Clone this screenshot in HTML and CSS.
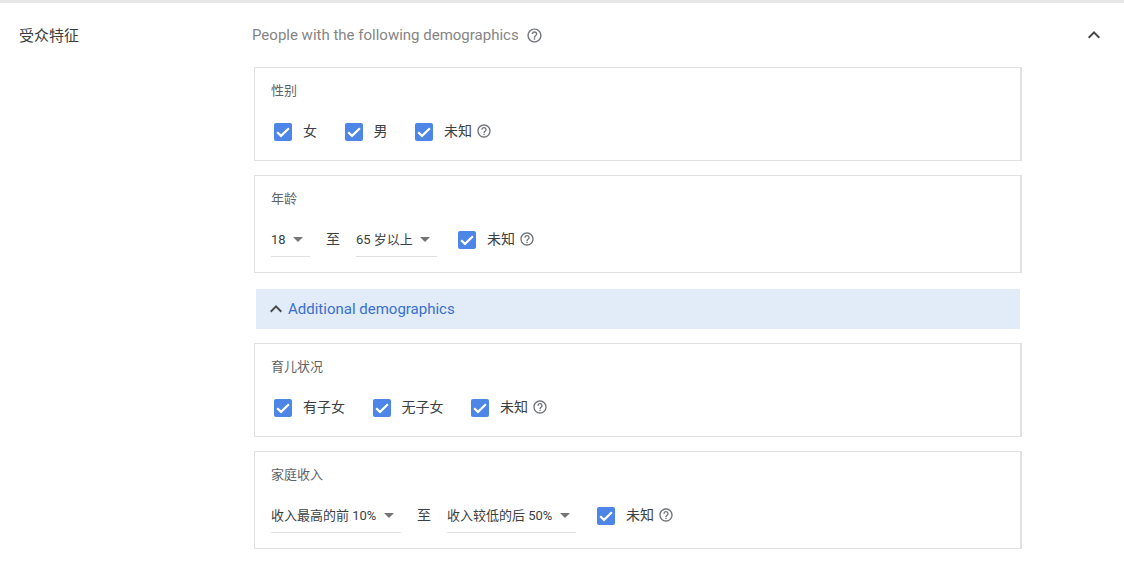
FILE: index.html
```html
<!DOCTYPE html>
<html lang="zh-CN">
<head>
<meta charset="utf-8">
<title>受众特征</title>
<link rel="stylesheet" href="styles.css">
</head>
<body>
<svg class="defs" width="0" height="0" aria-hidden="true">
  <symbol id="help" viewBox="0 0 24 24"><path d="M11 18h2v-2h-2v2zm1-16C6.48 2 2 6.48 2 12s4.48 10 10 10 10-4.48 10-10S17.52 2 12 2zm0 18c-4.41 0-8-3.59-8-8s3.59-8 8-8 8 3.59 8 8-3.59 8-8 8zm0-14c-2.21 0-4 1.79-4 4h2c0-1.1.9-2 2-2s2 .9 2 2c0 2-3 1.75-3 5h2c0-2.25 3-2.5 3-5 0-2.21-1.79-4-4-4z"/></symbol>
  <symbol id="box" viewBox="0 0 18 18"><rect width="18" height="18" rx="2" fill="#4d86e6"/><path d="M3.2 9.2l3.8 3.7L14.9 5.2" fill="none" stroke="#fff" stroke-width="2.2"/></symbol>
  <symbol id="up" viewBox="0 0 24 24"><path d="M7.41 15.41 12 10.83l4.59 4.58L18 14l-6-6-6 6z"/></symbol>
</svg>
<main class="section">
  <h2 class="section-label">受众特征</h2>
  <div class="section-body">
    <div class="intro">
      <span class="intro-text">People with the following demographics</span>
      <svg class="help help-intro"><use href="#help"/></svg>
    </div>

    <section class="card">
      <h3 class="card-title">性别</h3>
      <div class="controls checks">
        <label class="check"><svg class="box"><use href="#box"/></svg><span class="check-text">女</span></label>
        <label class="check"><svg class="box"><use href="#box"/></svg><span class="check-text">男</span></label>
        <label class="check"><svg class="box"><use href="#box"/></svg><span class="check-text">未知</span><svg class="help"><use href="#help"/></svg></label>
      </div>
    </section>

    <section class="card card-range">
      <h3 class="card-title">年龄</h3>
      <div class="controls">
        <div class="select select-18"><span>18</span><i class="caret"></i></div>
        <span class="to">至</span>
        <div class="select select-65"><span>65 岁以上</span><i class="caret"></i></div>
        <label class="check check-after"><svg class="box"><use href="#box"/></svg><span class="check-text">未知</span><svg class="help"><use href="#help"/></svg></label>
      </div>
    </section>

    <div class="banner">
      <svg class="banner-icon"><use href="#up"/></svg>
      <span>Additional demographics</span>
    </div>

    <section class="card">
      <h3 class="card-title">育儿状况</h3>
      <div class="controls checks">
        <label class="check"><svg class="box"><use href="#box"/></svg><span class="check-text">有子女</span></label>
        <label class="check"><svg class="box"><use href="#box"/></svg><span class="check-text">无子女</span></label>
        <label class="check"><svg class="box"><use href="#box"/></svg><span class="check-text">未知</span><svg class="help"><use href="#help"/></svg></label>
      </div>
    </section>

    <section class="card card-range">
      <h3 class="card-title">家庭收入</h3>
      <div class="controls">
        <div class="select select-income-top"><span>收入最高的前 10%</span><i class="caret"></i></div>
        <span class="to">至</span>
        <div class="select select-income"><span>收入较低的后 50%</span><i class="caret"></i></div>
        <label class="check check-after"><svg class="box"><use href="#box"/></svg><span class="check-text">未知</span><svg class="help"><use href="#help"/></svg></label>
      </div>
    </section>
  </div>
  <svg class="collapse"><use href="#up"/></svg>
</main>
</body>
</html>
```
FILE: styles.css
```css
* { box-sizing: border-box; }
html, body { margin: 0; padding: 0; }
body {
  width: 1124px;
  height: 573px;
  overflow: hidden;
  background: #fff;
  color: #3c4043;
  font: 13px/18px Roboto, "Noto Sans CJK SC", sans-serif;
}
.defs { position: absolute; }
.section {
  display: flex;
  align-items: flex-start;
  border-top: 3px solid #e6e6e6;
  padding: 0 0 0 19px;
}
.section-label {
  width: 235px;
  margin: 23px 0 0;
  font-size: 15px;
  line-height: 20px;
  font-weight: 400;
  color: #3c3c3c;
}
.section-body {
  width: 768px;
  display: flex;
  flex-direction: column;
}
.intro {
  display: flex;
  align-items: center;
  height: 64px;
  margin-left: -2px;
  color: #858585;
  font-size: 15px;
}
.help { width: 16px; height: 16px; fill: #707478; margin-left: 4px; flex: none; }
.help-intro { width: 17px; height: 17px; margin-left: 7px; }
.card {
  height: 94px;
  border: 1px solid #e0e0e0;
  border-right-width: 2px;
  padding: 14px 16px 0;
  margin-bottom: 14px;
}
.card-range { height: 98px; }
.card-title {
  margin: 0;
  font-size: 13px;
  line-height: 18px;
  font-weight: 400;
  color: #5f6368;
}
.controls {
  display: flex;
  align-items: center;
  margin-top: 19px;
  color: #3c4043;
}
.card-range .controls { margin-top: 15px; height: 34px; }
.checks { padding-left: 3px; height: 24px; gap: 27.5px; }
.checks .box { margin-top: 2px; }
.check { display: flex; align-items: center; }
.box { width: 18px; height: 18px; flex: none; }
.check-text { margin-left: 11px; font-size: 14px; }
.check-after .check-text { padding-bottom: 2px; }
.check-after .help { margin-bottom: 2px; }
.select {
  display: flex;
  align-items: center;
  height: 34px;
  border-bottom: 1px solid #e0e0e0;
}
.select-18 { width: 39px; }
.select-65 { width: 81px; }
.select-income-top { width: 130px; }
.select-income { width: 129px; }
.caret {
  width: 0;
  height: 0;
  margin-left: 7.5px;
  border-left: 5px solid transparent;
  border-right: 5px solid transparent;
  border-top: 5px solid #757575;
}
.to { margin: 0 16px; padding-bottom: 2px; font-size: 14px; }
.check-after { margin-left: 21px; }
.banner {
  display: flex;
  align-items: center;
  height: 40px;
  margin: 2px 2px 14px;
  padding-left: 8px;
  background: #e2ecf9;
  color: #3a6fd0;
  font-size: 15px;
}
.banner-icon { width: 24px; height: 24px; fill: #4a4a4a; flex: none; }
.collapse { width: 24px; height: 24px; fill: #444; margin: 20px 0 0 60px; flex: none; }
```
